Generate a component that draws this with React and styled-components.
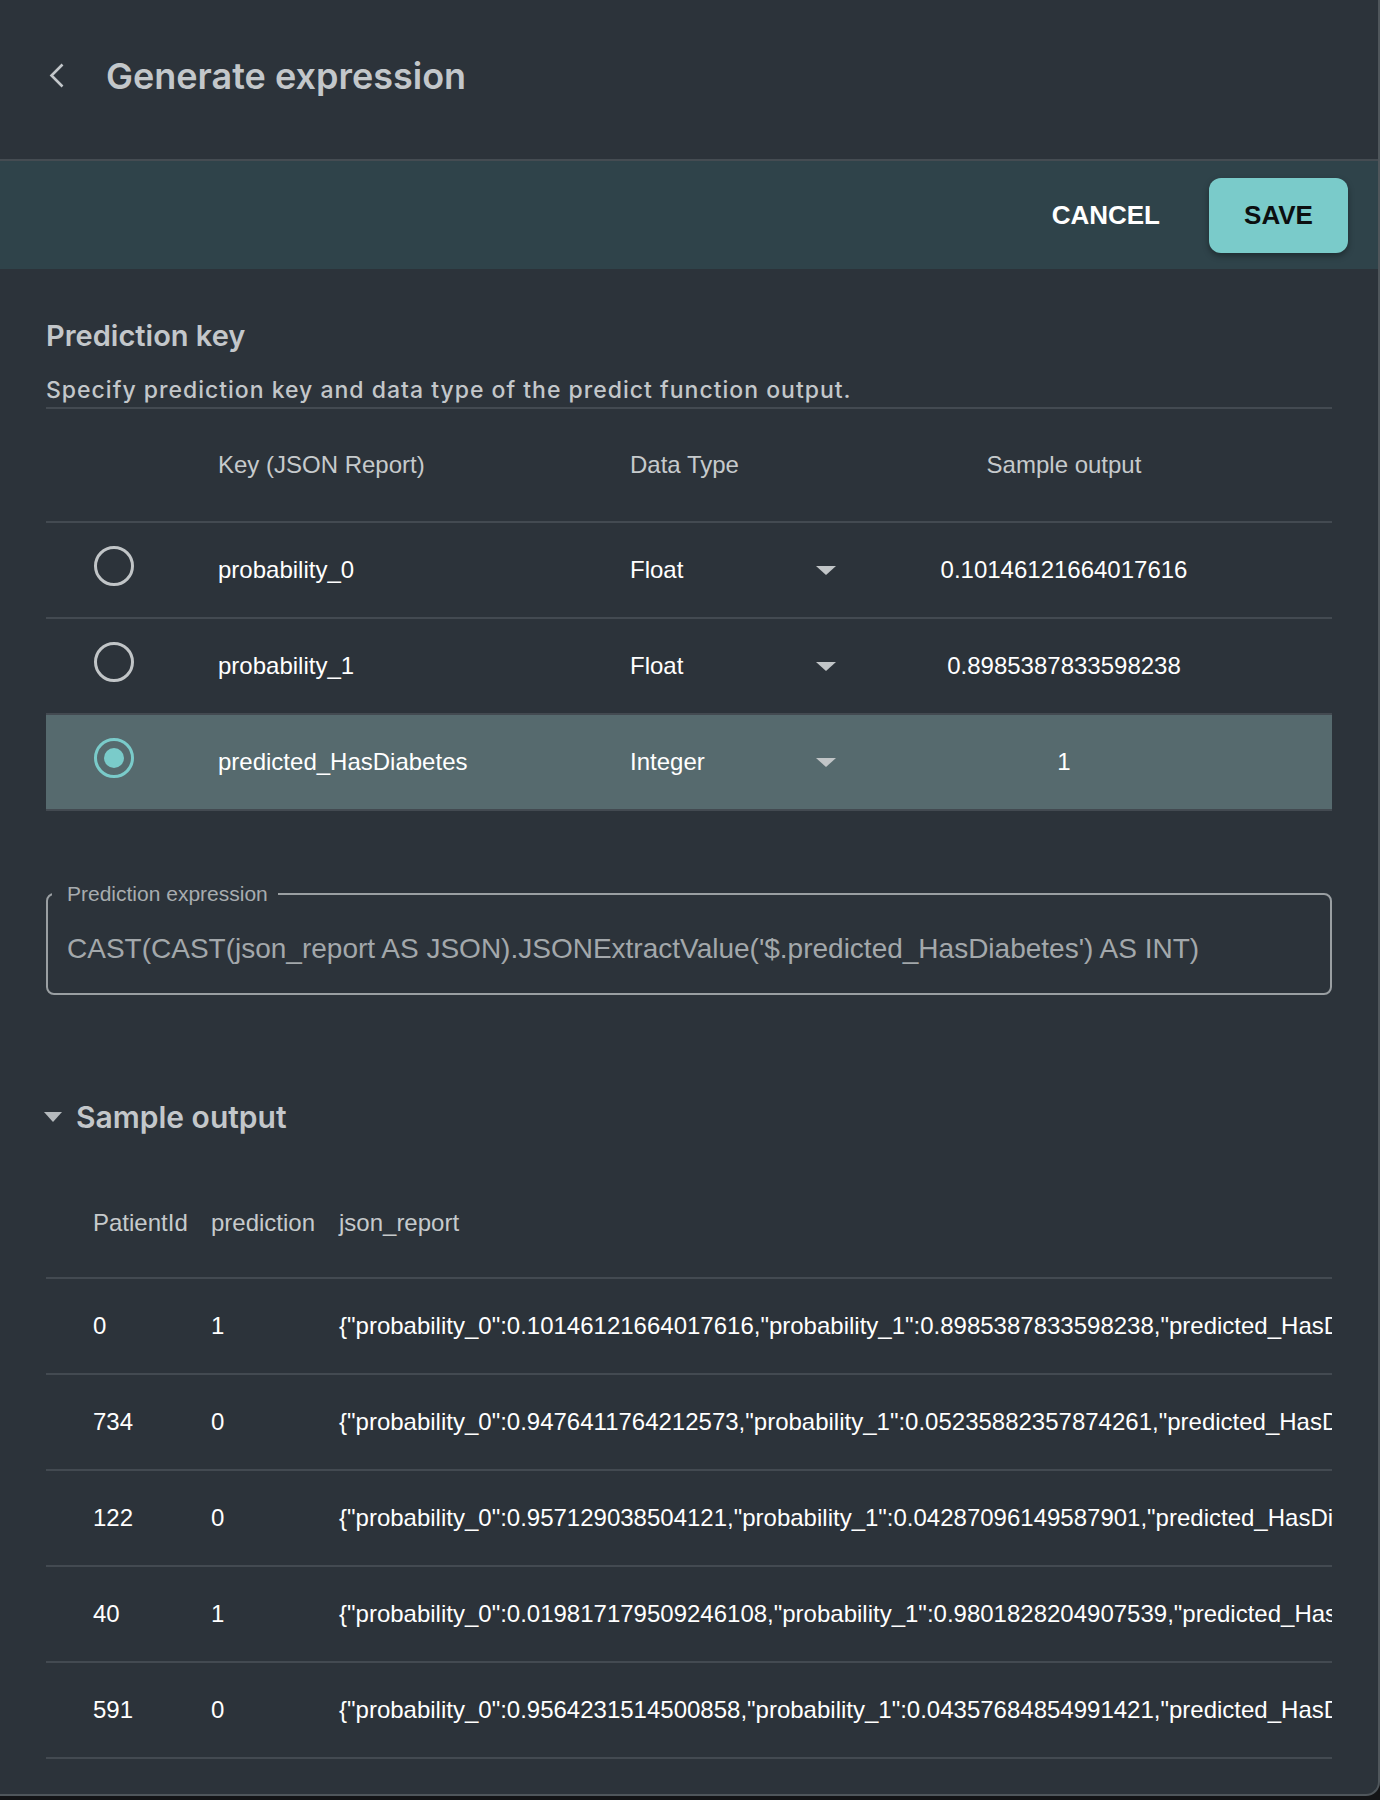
import styled, {createGlobalStyle} from "styled-components";

const GlobalStyle = createGlobalStyle`
  body {
    margin: 0;
    background: #131416;
    font-family: "Liberation Sans", Arial, sans-serif;
  }
`;

const Page = styled.div`
  width: 1380px;
  height: 1796px;
  box-sizing: border-box;
  background: #2c333a;
  border-right: 2px solid #4f565b;
  border-bottom: 2px solid #4f565b;
  border-bottom-right-radius: 14px;
  overflow: hidden;
`;

const Header = styled.header`
  height: 161px;
  box-sizing: border-box;
  border-bottom: 2px solid #454c52;
  display: flex;
  align-items: center;
  gap: 41px;
  padding: 0 0 8px 49px;
`;

const BackButton = styled.button`
  background: none;
  border: 0;
  padding: 0;
  display: flex;
  cursor: pointer;
`;

const Title = styled.h1`
  margin: 0;
  font-family: Inter, "Noto Sans", sans-serif;
  font-weight: 600;
  font-size: 36px;
  color: #c3c7ca;
`;

const Toolbar = styled.div`
  height: 108px;
  background: #2f434a;
  display: flex;
  justify-content: flex-end;
  align-items: center;
  gap: 49px;
  padding-right: 30px;
`;

const TextButton = styled.button`
  background: none;
  border: 0;
  padding: 0;
  font-family: "Liberation Sans", Arial, sans-serif;
  font-weight: 700;
  font-size: 26px;
  color: #ffffff;
`;

const SaveButton = styled.button`
  width: 139px;
  height: 75px;
  border: 0;
  border-radius: 12px;
  background: #7acbca;
  box-shadow: 0 3px 6px rgba(0, 0, 0, 0.35);
  font-family: "Liberation Sans", Arial, sans-serif;
  font-weight: 700;
  font-size: 26px;
  color: #0c0f10;
`;

const Content = styled.main`
  padding: 0 46px;
`;

const SectionTitle = styled.h2`
  margin: ${p => p.$top}px 0 0;
  font-family: Inter, "Noto Sans", sans-serif;
  font-weight: 600;
  font-size: ${p => p.$size || 29}px;
  line-height: 36px;
  color: #c3c7ca;
  display: flex;
  align-items: center;
  gap: 14px;
`;

const Expander = styled.span`
  width: 0;
  height: 0;
  margin-left: -2px;
  border-left: 9px solid transparent;
  border-right: 9px solid transparent;
  border-top: 10px solid #b5babd;
`;

const Hint = styled.p`
  margin: 21px 0 0;
  padding-bottom: 2px;
  border-bottom: 2px solid #434a51;
  font-family: Inter, "Noto Sans", sans-serif;
  font-weight: 500;
  font-size: 23px;
  line-height: 30px;
  letter-spacing: 1px;
  color: #c3c7ca;
`;

const KeyRow = styled.div`
  display: grid;
  grid-template-columns: 172px 412px 222px 1fr;
  align-items: center;
  height: ${p => (p.$head ? 114 : 96)}px;
  box-sizing: border-box;
  border-bottom: 2px solid #434a51;
  background: ${p => (p.$selected ? "#566a6e" : "transparent")};
  font-size: 24px;
  color: ${p => (p.$head ? "#c6cacc" : "#ffffff")};
`;

const Radio = styled.span`
  width: 40px;
  height: 40px;
  margin: -8px 0 0 48px;
  box-sizing: border-box;
  border-radius: 50%;
  border: 3px solid ${p => (p.$checked ? "#7acbca" : "#c1c5c7")};
  display: flex;
  align-items: center;
  justify-content: center;

  &::after {
    content: "";
    display: ${p => (p.$checked ? "block" : "none")};
    width: 20px;
    height: 20px;
    border-radius: 50%;
    background: #7acbca;
  }
`;

const TypeSelect = styled.div`
  display: flex;
  justify-content: space-between;
  align-items: center;
  padding-right: 16px;
`;

const Caret = styled.span`
  width: 0;
  height: 0;
  border-left: 10px solid transparent;
  border-right: 10px solid transparent;
  border-top: 9px solid #c1c5c7;
`;

const OutputCell = styled.div`
  text-align: center;
  padding-right: 56px;
`;

const ExpressionField = styled.fieldset`
  margin: 72px 0 0;
  padding: 0 19px;
  border: 2px solid #9a9fa2;
  border-radius: 8px;
`;

const Legend = styled.legend`
  margin-left: -15px;
  padding: 0 10px 0 15px;
  font-size: 21px;
  line-height: 22px;
  color: #a7acaf;
`;

const ExpressionValue = styled.div`
  height: 88px;
  display: flex;
  align-items: center;
  font-size: 28px;
  color: #a3a8ab;
  white-space: nowrap;
`;

const SampleRow = styled.div`
  display: grid;
  grid-template-columns: 153px 128px minmax(0, 1fr);
  align-items: center;
  height: ${p => (p.$head ? 110 : 96)}px;
  margin-top: ${p => (p.$head ? 34 : 0)}px;
  box-sizing: border-box;
  border-bottom: 2px solid #434a51;
  font-size: 24px;
  color: ${p => (p.$head ? "#c6cacc" : "#ffffff")};
`;

const SampleCell = styled.div`
  padding: 0 12px;
  white-space: nowrap;
  overflow: hidden;

  &:first-child {
    padding-left: 47px;
  }

  &:last-child {
    padding-right: 0;
  }
`;

const keys = [
    {name: "probability_0", type: "Float", sample: "0.10146121664017616"},
    {name: "probability_1", type: "Float", sample: "0.8985387833598238"},
    {name: "predicted_HasDiabetes", type: "Integer", sample: "1", selected: true},
];

const samples = [
    ["0", "1", "0.10146121664017616", "0.8985387833598238", 1],
    ["734", "0", "0.9476411764212573", "0.05235882357874261", 0],
    ["122", "0", "0.957129038504121", "0.04287096149587901", 0],
    ["40", "1", "0.019817179509246108", "0.9801828204907539", 1],
    ["591", "0", "0.9564231514500858", "0.04357684854991421", 0],
];

function App() {
    return (
        <Page>
            <GlobalStyle/>
            <Header>
                <BackButton aria-label="Back">
                    <svg width="16" height="25" viewBox="0 0 16 25" fill="none">
                        <polyline points="13.5,1.5 2.5,12.5 13.5,23.5" stroke="#c3c7ca" strokeWidth="2.6"/>
                    </svg>
                </BackButton>
                <Title>Generate expression</Title>
            </Header>

            <Toolbar>
                <TextButton>CANCEL</TextButton>
                <SaveButton>SAVE</SaveButton>
            </Toolbar>

            <Content>
                <SectionTitle $top={49}>Prediction key</SectionTitle>
                <Hint>Specify prediction key and data type of the predict function output.</Hint>

                <KeyRow $head>
                    <div/>
                    <div>Key (JSON Report)</div>
                    <div>Data Type</div>
                    <OutputCell>Sample output</OutputCell>
                </KeyRow>
                {keys.map(k => (
                    <KeyRow key={k.name} $selected={k.selected}>
                        <Radio $checked={k.selected}/>
                        <div>{k.name}</div>
                        <TypeSelect>
                            {k.type}
                            <Caret/>
                        </TypeSelect>
                        <OutputCell>{k.sample}</OutputCell>
                    </KeyRow>
                ))}

                <ExpressionField>
                    <Legend>Prediction expression</Legend>
                    <ExpressionValue>
                        CAST(CAST(json_report AS JSON).JSONExtractValue('$.predicted_HasDiabetes') AS INT)
                    </ExpressionValue>
                </ExpressionField>

                <SectionTitle $top={104} $size={30}>
                    <Expander/>
                    Sample output
                </SectionTitle>

                <SampleRow $head>
                    <SampleCell>PatientId</SampleCell>
                    <SampleCell>prediction</SampleCell>
                    <SampleCell>json_report</SampleCell>
                </SampleRow>
                {samples.map(([id, pred, p0, p1, hd]) => (
                    <SampleRow key={id}>
                        <SampleCell>{id}</SampleCell>
                        <SampleCell>{pred}</SampleCell>
                        <SampleCell>
                            {`{"probability_0":${p0},"probability_1":${p1},"predicted_HasDiabetes":${hd}}`}
                        </SampleCell>
                    </SampleRow>
                ))}
            </Content>
        </Page>
    );
}

export default App;
